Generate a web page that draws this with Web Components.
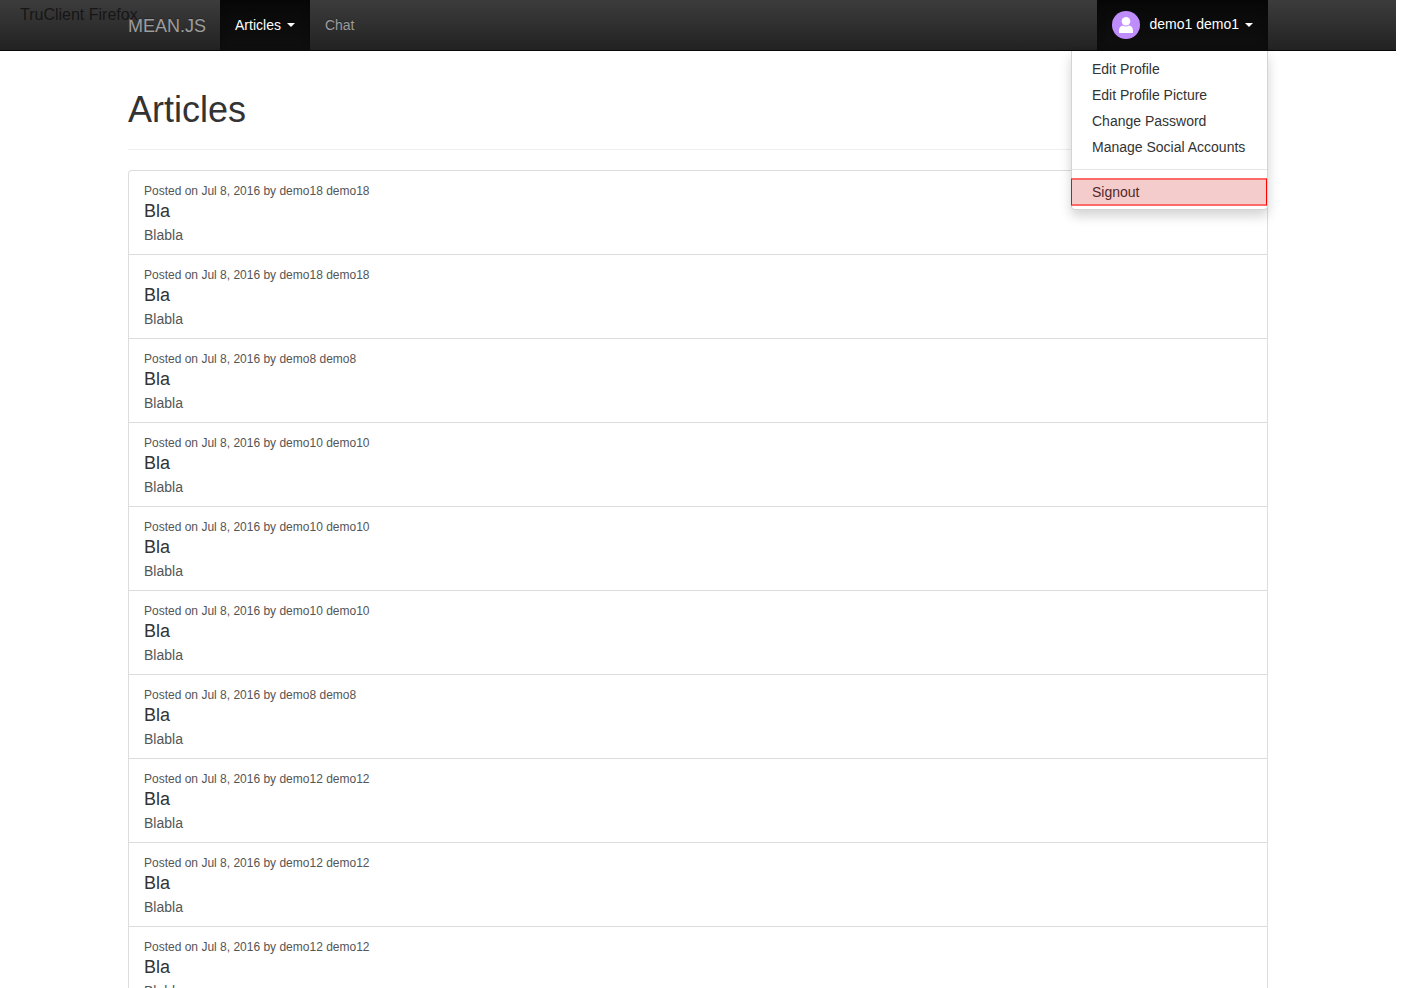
<!DOCTYPE html>
<html lang="en">
<head>
<meta charset="utf-8">
<meta name="viewport" content="width=device-width, initial-scale=1">
<title>MEAN.JS - Articles</title>
<style>
  html, body { margin: 0; height: 100%; background: #fff; }
  body {
    font: 14px/20px "Liberation Sans", Arial, Helvetica, sans-serif;
    color: #333;
  }
</style>
</head>
<body>
<app-shell>
  <run-label slot="overlay">TruClient Firefox</run-label>
  <nav-bar slot="header">
    <a-brand slot="brand">MEAN.JS</a-brand>
    <nav-item slot="left" open caret>Articles</nav-item>
    <nav-item slot="left">Chat</nav-item>
    <user-menu slot="right" name="demo1 demo1">
      <menu-link>Edit Profile</menu-link>
      <menu-link>Edit Profile Picture</menu-link>
      <menu-link>Change Password</menu-link>
      <menu-link>Manage Social Accounts</menu-link>
      <menu-divider></menu-divider>
      <menu-link marked>Signout</menu-link>
    </user-menu>
  </nav-bar>
  <page-heading>Articles</page-heading>
  <article-list></article-list>
</app-shell>

<script>
const define = (name, html, setup) => {
  const template = document.createElement("template");
  template.innerHTML = html;
  customElements.define(name, class extends HTMLElement {
    connectedCallback() {
      if (this.shadowRoot) return;
      const root = this.attachShadow({ mode: "open" });
      root.append(template.content.cloneNode(true));
      if (setup) setup(this, root);
    }
  });
};

define("app-shell", `
  <style>
    :host { display: block; position: relative; height: 100vh; overflow-y: auto;
            scrollbar-width: none; box-sizing: border-box; padding-right: 16px; }
    main { max-width: 1140px; margin: 0 auto; padding: 0 15px; }
  </style>
  <slot name="header"></slot>
  <slot name="overlay"></slot>
  <main><slot></slot></main>`);

define("run-label", `
  <style>
    :host { position: absolute; top: 5px; left: 20px; z-index: 5; pointer-events: none;
            font-size: 16px; line-height: 20px; color: #161616; white-space: nowrap; }
  </style>
  <slot></slot>`);

define("nav-bar", `
  <style>
    :host { display: block; position: relative; z-index: 2; border-bottom: 1px solid #080808;
            background: linear-gradient(#3c3c3c, #222); }
    nav { display: flex; max-width: 1140px; margin: 0 auto; padding: 0 15px; height: 50px; }
    .left { display: flex; flex: 1; }
  </style>
  <nav aria-label="Main">
    <slot name="brand"></slot>
    <div class="left"><slot name="left"></slot></div>
    <slot name="right"></slot>
  </nav>`);

define("a-brand", `
  <style>
    :host { display: block; }
    a { display: block; padding: 16px 14px 14px 0; font-size: 18px; line-height: 20px; color: #9d9d9d;
        text-decoration: none; text-shadow: 0 -1px 0 rgba(0,0,0,.25); }
  </style>
  <a href="#"><slot></slot></a>`);

define("nav-item", `
  <style>
    :host { display: block; }
    a { display: flex; align-items: center; gap: 6px; padding: 15px; line-height: 20px; color: #9d9d9d;
        text-decoration: none; text-shadow: 0 -1px 0 rgba(0,0,0,.25); }
    :host([open]) a { color: #fff; background: linear-gradient(#080808, #0f0f0f);
        box-shadow: inset 0 3px 9px rgba(0,0,0,.25); }
    i { display: none; border-top: 4px solid; border-left: 4px solid transparent;
        border-right: 4px solid transparent; }
    :host([caret]) i { display: block; }
  </style>
  <a href="#"><slot></slot><i></i></a>`);

define("user-menu", `
  <style>
    :host { display: block; position: relative; }
    button { display: flex; align-items: center; height: 50px; margin: 0; border: 0; padding: 0 15px;
        font: inherit; color: #fff; background: linear-gradient(#080808, #0f0f0f);
        box-shadow: inset 0 3px 9px rgba(0,0,0,.25); text-shadow: 0 -1px 0 rgba(0,0,0,.25); }
    svg { display: block; width: 28px; height: 28px; margin-right: 9px; }
    .name { padding-bottom: 2px; }
    i { margin-left: 6px; border-top: 4px solid; border-left: 4px solid transparent;
        border-right: 4px solid transparent; }
    .menu { position: absolute; top: calc(100% + 1px); right: 0; min-width: 195px; padding: 5px 0 4px;
        background: #fff; border: 1px solid #d4d4d4;
        border-top: 0; border-radius: 0 0 4px 4px; box-shadow: 0 6px 12px rgba(0,0,0,.175); }
  </style>
  <button type="button" aria-haspopup="true" aria-expanded="true">
    <svg viewBox="0 0 28 28" aria-hidden="true">
      <circle cx="14" cy="14" r="14" fill="#bf8cfc"/>
      <circle cx="14" cy="10.3" r="4.3" fill="#fff"/>
      <path fill="#fff" d="M7 22v-2.500c0-3 1.600-4.500 4-4.900 1.800 1.300 4.200 1.300 6 0 2.400.4 4 1.900 4 4.900V22z"/>
    </svg>
    <span class="name"></span><i></i>
  </button>
  <div class="menu"><slot></slot></div>`,
  (host, root) => { root.querySelector(".name").textContent = host.getAttribute("name"); });

define("menu-link", `
  <style>
    :host { display: block; position: relative; }
    a { display: block; padding: 3px 20px; line-height: 20px; color: #333; text-decoration: none;
        white-space: nowrap; }
    :host([marked])::after { content: ""; position: absolute; inset: -1px 0 -1px -1px;
        background: rgba(204,0,0,.2); border: solid red; border-width: 2px 1px;
        border-top-color: #fb6969; border-bottom-color: #fb6969; pointer-events: none;
        background-clip: padding-box; }
  </style>
  <a href="#"><slot></slot></a>`);

define("menu-divider", `
  <style>:host { display: block; height: 1px; margin: 9px 0; background: #e5e5e5; }</style>`);

define("page-heading", `
  <style>
    :host { display: block; margin: 39px 0 20px; padding-bottom: 19px; border-bottom: 1px solid #eee; }
    h1 { margin: 0; font-size: 36px; line-height: 40px; font-weight: 400; }
  </style>
  <h1><slot></slot></h1>`);

define("article-card", `
  <style>
    :host { display: block; }
    a { display: block; padding: 10px 15px; border-bottom: 1px solid #ddd; color: #555; text-decoration: none; }
    small { display: block; font-size: 12px; line-height: 20px; }
    h4 { margin: 0 0 5px; font-size: 18px; line-height: 20px; font-weight: 400; color: #333; }
    p { margin: 0; line-height: 18px; }
  </style>
  <a href="#">
    <small>Posted on <slot name="date"></slot> by <slot name="author"></slot></small>
    <h4><slot name="title"></slot></h4>
    <p><slot></slot></p>
  </a>`);

define("article-list", `
  <style>
    :host { display: block; margin-bottom: 20px; border: 1px solid #ddd; border-bottom: 0;
            border-radius: 4px; }
  </style>`,
  (host, root) => {
    for (const n of [18, 18, 8, 10, 10, 10, 8, 12, 12, 12]) {
      const card = document.createElement("article-card");
      card.innerHTML = `<span slot="date">Jul 8, 2016</span><span slot="author">demo${n} demo${n}</span>` +
        `<span slot="title">Bla</span>Blabla`;
      root.append(card);
    }
  });
</script>
</body>
</html>
